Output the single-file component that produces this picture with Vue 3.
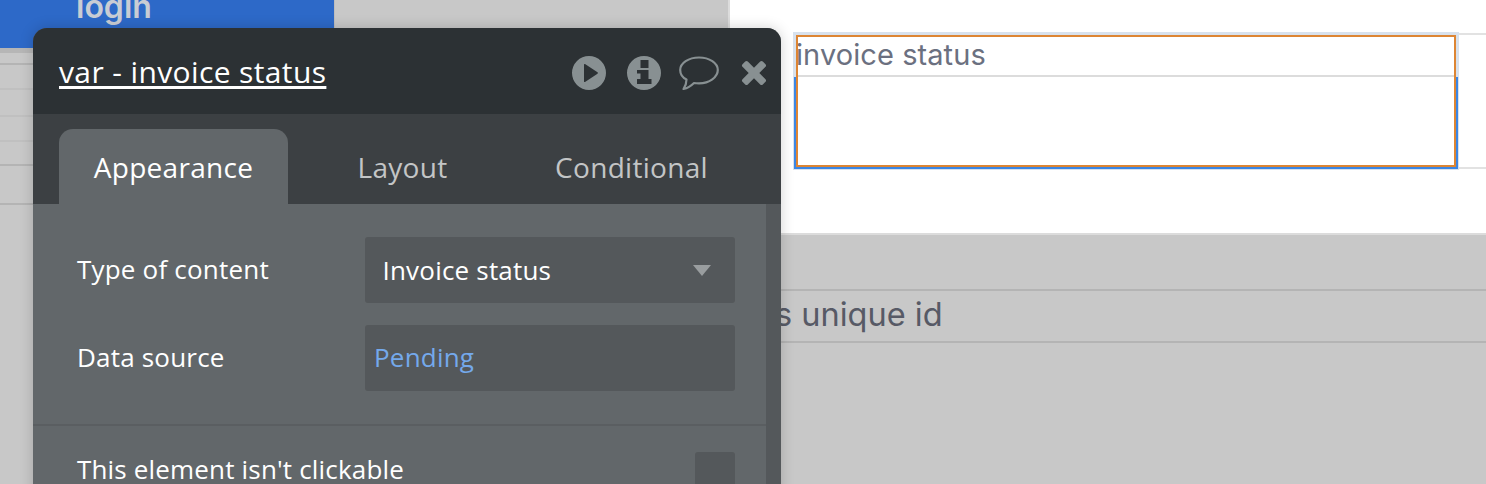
<script setup>
const tabs = [
  { label: 'Appearance', active: true },
  { label: 'Layout', active: false },
  { label: 'Conditional', active: false },
]
const guideLines = [
  { y: 63, strong: true },
  { y: 88, strong: false },
  { y: 115, strong: false },
  { y: 140, strong: false },
  { y: 164, strong: true },
  { y: 203, strong: true },
]
</script>

<template>
  <div class="canvas">
    <div class="whitezone"></div>
    <div class="login"><span>login</span></div>
    <div class="login-under"></div>
    <div v-for="g in guideLines" :key="g.y" class="guide" :class="{ strong: g.strong }" :style="{ top: g.y + 'px' }"></div>

    <div class="cell">
      <div class="cell-head">invoice status</div>
    </div>
    <div class="line-r top"></div>
    <div class="line-r bottom"></div>

    <div class="row-text">s unique id</div>

    <section class="panel">
      <header class="head">
        <a class="title">var - invoice status</a>
        <div class="icons">
          <svg class="i-play" width="36" height="36" viewBox="0 0 36 36"><path fill="#889092" fill-rule="evenodd" d="M18 1a17 17 0 1 0 0 34a17 17 0 0 0 0-34zM13 9.500C13 9 13.500 8.800 14 9L26.500 17.300C27 17.700 27 18.300 26.500 18.700L14 27C13.500 27.200 13 27 13 26.500z"/></svg>
          <svg class="i-info" width="36" height="36" viewBox="0 0 36 36"><path fill="#889092" fill-rule="evenodd" d="M18 1a17 17 0 1 0 0 34a17 17 0 0 0 0-34zM14.500 5h8v8h-8zM11 15h11.500v9h3v5h-14.500v-5h3.500v-5.500h-3.500z"/></svg>
          <svg class="i-chat" width="40" height="36" viewBox="0 0 40 36"><path fill="none" stroke="#889092" stroke-width="2.200" stroke-linejoin="round" d="M20 2.500C9.500 2.500 1.200 8 1.200 15C1.200 19 3.500 22.500 7.500 24.500C7.500 28 6.500 31 4.500 34C9 33 12.500 30.500 15 28C16.500 28.200 18.500 28.300 20 28.300C30.500 28.300 38.800 22 38.800 15C38.800 8 30.500 2.500 20 2.500z"/></svg>
          <svg class="i-close" width="28" height="28" viewBox="0 0 28 28"><path fill="#889092" d="M7.800 2.500L14 8.700L20.200 2.500C21 1.700 22 1.700 22.800 2.500L25.500 5.200C26.300 6 26.300 7 25.500 7.800L19.300 14L25.500 20.200C26.300 21 26.300 22 25.500 22.800L22.800 25.500C22 26.300 21 26.300 20.200 25.500L14 19.300L7.800 25.500C7 26.300 6 26.300 5.200 25.500L2.500 22.800C1.700 22 1.700 21 2.500 20.200L8.700 14L2.500 7.800C1.700 7 1.700 6 2.500 5.200L5.200 2.500C6 1.700 7 1.700 7.800 2.500z"/></svg>
        </div>
      </header>
      <nav class="tabs">
        <div v-for="t in tabs" :key="t.label" class="tab" :class="{ active: t.active }">{{ t.label }}</div>
      </nav>
      <div class="body">
        <div class="content">
          <div class="field">
            <label>Type of content</label>
            <div class="box select">
              <span>Invoice status</span>
              <i class="caret"></i>
            </div>
          </div>
          <div class="field">
            <label>Data source</label>
            <div class="box dyn"><span>Pending</span></div>
          </div>
          <div class="sep"></div>
          <div class="check-row">
            <label>This element isn't clickable</label>
            <div class="check"></div>
          </div>
        </div>
        <div class="scroll"></div>
      </div>
    </section>
  </div>
</template>

<style>
html, body { margin: 0; padding: 0; overflow: hidden; background: #c8c8c8; }
</style>

<style scoped>
.canvas { position: relative; width: 1486px; height: 484px; overflow: hidden; background: #c8c8c8; font-family: "Open Sans", sans-serif; }
.whitezone { position: absolute; left: 728px; top: 0; right: 0; height: 233px; background: #fff; border-bottom: 2px solid #dcdcdc; border-left: 2px solid #dcdcdc; }
.login { position: absolute; left: 0; top: 0; width: 334px; height: 48px; background: #2d69c8; border-right: 1px solid #bdbdbd; overflow: hidden; }
.login span { position: absolute; left: 76px; top: -8px; font: 600 32px/30px "Inter", sans-serif; color: #c9cdd4; }
.login-under { position: absolute; left: 0; top: 48px; width: 334px; height: 5px; background: #b6b6b6; }
.guide { position: absolute; left: 0; width: 40px; height: 2px; background: #c0c0c0; }
.guide.strong { background: #b4b4b4; }
.cell { position: absolute; left: 793px; top: 32px; width: 666px; height: 138px; box-sizing: border-box; background: #fff; border: 3px solid #d8e1ec; }
.cell::before { content: ""; position: absolute; left: -2px; right: -2px; top: 42px; bottom: -2px; border: solid #3b86e4; border-width: 0 2px 2px 2px; box-sizing: content-box; }
.cell::after { content: ""; position: absolute; left: 0; top: 0; right: 0; bottom: 0; border: 2px solid #dd8533; }
.cell-head { height: 42px; box-sizing: border-box; border-bottom: 2px solid #dcdcdc; font: 400 29px/40px "Inter", sans-serif; letter-spacing: .08px; color: #6b7080; }
.line-r { position: absolute; left: 1459px; right: 0; height: 2px; background: #e2e2e2; }
.line-r.top { top: 33px; }
.line-r.bottom { top: 167px; }
.row-text { position: absolute; left: 700px; right: 0; top: 289px; height: 54px; border: solid #b4b4b4; border-width: 2px 0; font: 400 32.5px/48px "Inter", sans-serif; color: #575a66; padding-left: 75px; box-sizing: border-box; }
.panel { position: absolute; left: 33px; top: 28px; width: 748px; height: 470px; border-radius: 14px 14px 0 0; overflow: hidden; display: flex; flex-direction: column; background: #62676a; box-shadow: 0 0 14px rgba(0,0,0,.18); }
.head { height: 86px; flex: none; background: #2c3134; display: flex; align-items: center; justify-content: space-between; padding: 0 13px 0 26px; }
.title { color: #fff; font-size: 30px; letter-spacing: .38px; line-height: 36px; padding-top: 2px; text-decoration: underline; text-decoration-thickness: 3px; text-underline-offset: 3px; }
.icons { display: flex; align-items: center; padding-top: 4px; }
.icons svg { display: block; }
.i-info { margin-left: 19px; }
.i-chat { margin-left: 17px; }
.i-close { margin-left: 21px; }
.tabs { height: 90px; flex: none; background: #3c4043; display: flex; align-items: flex-end; padding-left: 26px; }
.tab { width: 229px; height: 75px; display: flex; align-items: center; justify-content: center; color: #c3c5c6; font-size: 28px; letter-spacing: .3px; border-radius: 14px 14px 0 0; }
.tab.active { background: #62676a; color: #fff; }
.body { flex: 1; display: flex; }
.content { flex: 1; }
.scroll { width: 15px; background: #54585b; }
.field { display: flex; align-items: center; height: 66px; padding-left: 44px; margin-bottom: 22px; color: #fff; font-size: 26px; letter-spacing: .2px; }
.field:first-child { margin-top: 33px; }
.field label { width: 288px; flex: none; position: relative; top: -1px; }
.box { width: 370px; height: 66px; flex: none; box-sizing: border-box; background: #54585b; border-radius: 3px; display: flex; align-items: center; justify-content: space-between; }
.select { padding: 0 24px 0 17.500px; }
.dyn { padding: 0 0 2px 9px; color: #74a9ec; }
.caret { width: 0; height: 0; border: solid transparent; border-width: 11px 9px 0 9px; border-top-color: #999d9f; }
.sep { height: 2px; background: #5a5e61; margin-top: 33px; }
.check-row { display: flex; align-items: flex-start; justify-content: space-between; padding: 26px 31px 0 44px; color: #fff; font-size: 26px; letter-spacing: .17px; }
.check-row label { line-height: 36px; margin-top: -1px; }
.check { width: 40px; height: 40px; background: #54585b; border-radius: 3px; }
</style>
